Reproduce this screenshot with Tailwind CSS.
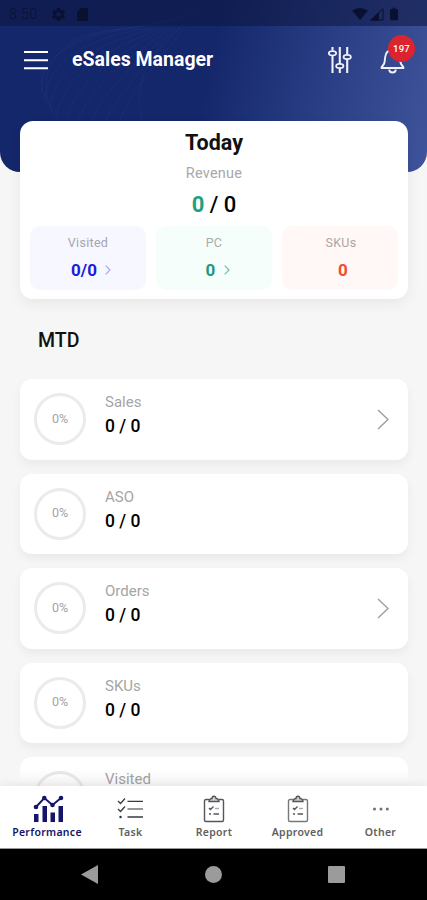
<!DOCTYPE html>
<html lang="en">
<head>
<meta charset="utf-8">
<title>eSales Manager</title>
<script src="https://cdn.jsdelivr.net/npm/@tailwindcss/browser@4"></script>
</head>
<body class="w-[427px] h-[900px] overflow-hidden bg-[#f6f6f6] font-['Roboto',sans-serif] text-black">
<div class="flex h-[900px] w-[427px] flex-col">
  <main class="h-[786px] shrink-0 overflow-hidden">
    <header class="relative h-[172px] overflow-hidden rounded-b-[20px] bg-[linear-gradient(103deg,#15276b_0%,#15276b_48%,#253a80_69%,#40549c_100%)]">
      <svg class="absolute left-0 top-0" width="427" height="172" fill="none" stroke="#8da5e8" stroke-opacity=".08" stroke-width=".7">
        <path d="M56 118C34 82 48 42 104 32S190 20 213 0"/><path d="M48 104C29 67 52 38 112 30S178 22 202 0"/>
        <path d="M42 92C38 57 74 33 142 28"/><path d="M45 100C46 63 85 37 151 28"/><path d="M50 109C53 70 94 43 158 28"/>
        <path d="M56 118C62 78 104 49 164 28"/><path d="M66 120C77 83 113 55 168 28"/><path d="M78 120C91 88 122 61 172 28"/>
        <path d="M92 120C103 93 130 67 176 28"/><path d="M106 120C116 98 138 72 180 28"/><path d="M120 120C127 101 144 77 184 28"/>
        <path d="M142 120C134 88 143 52 190 20"/>
      </svg>
      <div class="relative flex h-[26px] items-center bg-[#0c1640]/55 pl-[9px] pr-[29px] text-[#0a1130]">
        <span class="w-[43px] text-[14px] leading-none tracking-[.6px] font-light pt-[2px]">8:50</span>
        <svg class="mt-[2px]" width="13" height="13" viewBox="0 0 14 14" fill="currentColor" fill-rule="evenodd"><path d="M5.500 0h3l.5 2 1.500.8 2-.6L14 4.700 12.600 6.200v1.600L14 9.300l-1.500 2.500-2-.6L9 12l-.5 2h-3L5 12l-1.500-.8-2 .6L0 9.300l1.400-1.500V6.200L0 4.700l1.500-2.500 2 .6L5 2zM7 4.500a2.500 2.500 0 1 0 0 5 2.500 2.500 0 0 0 0-5z"/></svg>
        <svg class="ml-[12px] mt-[2px]" width="11" height="13" viewBox="0 0 11 13" fill="currentColor"><path d="M4 0h6q1 0 1 1v11q0 1-1 1H1q-1 0-1-1V4z"/></svg>
        <svg class="ml-auto mt-[1px]" width="16" height="12" viewBox="0 0 16 12" fill="currentColor"><path d="M0 2.500Q8-2.500 16 2.500L8 12z"/></svg>
        <svg class="ml-[2px] mt-[2px]" width="14" height="13" viewBox="0 0 14 13"><path d="M13 .8V12H1z" fill="none" stroke="currentColor"/><path d="M9 4v8.500H0z" fill="currentColor"/></svg>
        <svg class="ml-[6px] mt-[2px]" width="8" height="14" viewBox="0 0 9 14" fill="currentColor"><path d="M3 0h3v1.500h2q1 0 1 1V13q0 1-1 1H1q-1 0-1-1V2.500q0-1 1-1h2z"/></svg>
      </div>
      <div class="relative flex h-[68px] items-center pl-[24px] pr-[21px] text-white">
        <svg width="24" height="20" viewBox="0 0 24 20" stroke="#fff" stroke-width="1.900"><path d="M0 2h24M0 10.300h24M0 18.300h24"/></svg>
        <h1 class="ml-[24px] whitespace-nowrap text-[19.500px] font-bold leading-none [text-shadow:0_0_1px_#00005c]">eSales Manager</h1>
        <svg class="ml-auto" width="26" height="28" viewBox="0 0 26 28" fill="none" stroke="#f1f2fb" stroke-width="2.100"><path d="M5.500 1v3.500M5.500 9.500V27M12.800 1v17M12.800 22.500V27M20.200 1v7.500M20.200 13V27"/><ellipse cx="5.500" cy="7.300" rx="3.700" ry="2.200" stroke-width="1.700"/><ellipse cx="12.800" cy="20" rx="3.700" ry="2.200" stroke-width="1.700"/><ellipse cx="20.200" cy="11" rx="3.700" ry="2.200" stroke-width="1.700"/></svg>
        <div class="relative ml-[27px] h-[28px] w-[26px]">
          <svg width="26" height="28" viewBox="0 0 26 28" fill="none" stroke="#f1f2fb" stroke-width="1.900" stroke-linejoin="round"><path d="M1.500 22C1.500 20 4 19.500 4.500 16.500L5.200 11C5.700 6.500 8.500 4 12.500 4S19.300 6.500 19.800 11L20.500 16.500C21 19.500 23.500 20 23.500 22z"/><path d="M9.300 23.500a3.200 3 0 0 0 6.400 0"/></svg>
          <span class="absolute left-[8px] top-[-11px] flex h-[27px] w-[27px] items-center justify-center rounded-full bg-[#dc2330] text-[9.500px] font-medium leading-none tracking-[.2px]">197</span>
        </div>
      </div>
    </header>

    <section class="relative ml-[20px] -mt-[51px] mr-[19px] flex h-[178px] flex-col items-center rounded-[13px] bg-white px-[10px] pt-[11px] shadow-[0_5px_14px_rgba(0,0,0,0.06)]">
      <h2 class="text-[21.500px] font-bold leading-[22px] text-[#111]">Today</h2>
      <p class="mt-[12px] text-[14.500px] leading-[16px] tracking-[.25px] text-[#a8a8a8]">Revenue</p>
      <p class="mt-[10px] text-[22px] font-medium leading-[26px]"><span class="font-bold text-[#229f83]">0</span> / 0</p>
      <div class="mt-[8px] grid w-full grid-cols-3 gap-[10px] text-center">
        <div class="h-[64px] rounded-[10px] bg-[#f6f7ff] pt-[9px]">
          <p class="text-[12.500px] leading-[16px] tracking-[.3px] text-[#a5a5ad]">Visited</p>
          <div class="mt-[9px] flex items-center justify-center gap-[8px] pl-[10px] text-[17px] font-bold leading-[20px] text-[#1c1cda]"><span>0/0</span><svg class="mr-[4px]" width="6" height="10" viewBox="0 0 6 10" fill="none" stroke="#ada6f0" stroke-width="1.200"><path d="M.7.700 5 5 .7 9.300"/></svg></div>
        </div>
        <div class="h-[64px] rounded-[10px] bg-[#f5fefb] pt-[9px]">
          <p class="text-[12.500px] leading-[16px] tracking-[.3px] text-[#a5adaa]">PC</p>
          <div class="mt-[9px] flex items-center justify-center gap-[9px] pl-[9px] text-[17px] font-bold leading-[20px] text-[#25967a]"><span>0</span><svg class="mr-[1px]" width="6" height="10" viewBox="0 0 6 10" fill="none" stroke="#72bda8" stroke-width="1.200"><path d="M.7.700 5 5 .7 9.300"/></svg></div>
        </div>
        <div class="h-[64px] rounded-[10px] bg-[#fff8f6] pt-[9px]">
          <p class="pl-[2px] text-[12.500px] leading-[16px] tracking-[.3px] text-[#ada5a3]">SKUs</p>
          <div class="mt-[9px] pl-[6px] text-[17px] font-bold leading-[20px] text-[#f04d2e]">0</div>
        </div>
      </div>
    </section>

    <h2 class="ml-[38px] mt-[31px] h-[49px] text-[19.500px] font-medium leading-[22px] text-[#111]">MTD</h2>

    <section class="ml-[20px] mr-[19px] flex flex-col gap-[14px]">
      <article class="flex h-[80.500px] shrink-0 items-center rounded-[12px] bg-white pl-[14px] pr-[19px] shadow-[0_5px_10px_rgba(0,0,0,0.05)]">
        <div class="flex h-[52px] w-[52px] items-center justify-center rounded-full border-[3px] border-[#ebebeb] text-[12.500px] tracking-[-.2px] text-[#a3a3a3]">0%</div>
        <div class="ml-[19px] -mt-[8px]"><p class="text-[15px] leading-[19px] text-[#a5a5a5]">Sales</p><p class="mt-[3px] text-[17.500px] font-medium leading-[22px]">0 / 0</p></div>
        <svg class="ml-auto" width="12" height="21" viewBox="0 0 12 21" fill="none" stroke="#a0a0a0" stroke-width="1.500"><path d="m1 1 10 9.500L1 20"/></svg>
      </article>
      <article class="flex h-[80.500px] shrink-0 items-center rounded-[12px] bg-white pl-[14px] pr-[19px] shadow-[0_5px_10px_rgba(0,0,0,0.05)]">
        <div class="flex h-[52px] w-[52px] items-center justify-center rounded-full border-[3px] border-[#ebebeb] text-[12.500px] tracking-[-.2px] text-[#a3a3a3]">0%</div>
        <div class="ml-[19px] -mt-[8px]"><p class="text-[15px] leading-[19px] text-[#a5a5a5]">ASO</p><p class="mt-[3px] text-[17.500px] font-medium leading-[22px]">0 / 0</p></div>
      </article>
      <article class="flex h-[80.500px] shrink-0 items-center rounded-[12px] bg-white pl-[14px] pr-[19px] shadow-[0_5px_10px_rgba(0,0,0,0.05)]">
        <div class="flex h-[52px] w-[52px] items-center justify-center rounded-full border-[3px] border-[#ebebeb] text-[12.500px] tracking-[-.2px] text-[#a3a3a3]">0%</div>
        <div class="ml-[19px] -mt-[8px]"><p class="text-[15px] leading-[19px] text-[#a5a5a5]">Orders</p><p class="mt-[3px] text-[17.500px] font-medium leading-[22px]">0 / 0</p></div>
        <svg class="ml-auto" width="12" height="21" viewBox="0 0 12 21" fill="none" stroke="#a0a0a0" stroke-width="1.500"><path d="m1 1 10 9.500L1 20"/></svg>
      </article>
      <article class="flex h-[80.500px] shrink-0 items-center rounded-[12px] bg-white pl-[14px] pr-[19px] shadow-[0_5px_10px_rgba(0,0,0,0.05)]">
        <div class="flex h-[52px] w-[52px] items-center justify-center rounded-full border-[3px] border-[#ebebeb] text-[12.500px] tracking-[-.2px] text-[#a3a3a3]">0%</div>
        <div class="ml-[19px] -mt-[8px]"><p class="text-[15px] leading-[19px] text-[#a5a5a5]">SKUs</p><p class="mt-[3px] text-[17.500px] font-medium leading-[22px]">0 / 0</p></div>
      </article>
      <article class="flex h-[29px] shrink-0 items-start overflow-hidden rounded-t-[12px] bg-[linear-gradient(#fff_40%,#f4f4f4)] pl-[14px]">
        <div class="mt-[14px] h-[52px] w-[52px] shrink-0 rounded-full border-[3px] border-[#e5e5e5]"></div>
        <p class="ml-[19px] mt-[15px] text-[15px] leading-[14px] text-[#a0a0a0]">Visited</p>
      </article>
    </section>
  </main>

  <nav class="relative grid h-[63px] shrink-0 grid-cols-[94px_73px_94px_73px_93px] border-b border-[#999] bg-white pt-[9px] font-['Noto_Sans',sans-serif] text-[10.500px] font-semibold leading-[14px] tracking-[.3px] text-[#606060] shadow-[0_-3px_8px_rgba(0,0,0,0.05)]">
    <a class="flex flex-col items-center gap-[2px] text-[#15156b]">
      <svg class="ml-[3px]" width="31" height="28" viewBox="0 0 31 28" fill="currentColor"><path d="M1 19h4.500v8H1zM9.500 11H14v16H9.500zM17.500 17.500H22V27h-4.500zM25.500 11H30v16h-4.500z"/><path d="M3 12 11.300 3 19.500 10 28 3" fill="none" stroke="currentColor" stroke-width="1.900"/><circle cx="3" cy="12" r="2.300"/><circle cx="11.300" cy="3" r="2.300"/><circle cx="19.500" cy="10" r="2.300"/><circle cx="28" cy="3" r="2.300"/></svg>
      <span>Performance</span>
    </a>
    <a class="flex flex-col items-center gap-[2px]">
      <svg width="27" height="28" viewBox="0 0 27 28" fill="none" stroke="#3a3a43" stroke-width="1.300"><path d="m1 6 2.500 2.500L8 3.500M1 14l2.500 2.500L8 11.500"/><path d="M10.500 6.300H26M10.500 22H26"/><path d="M10.500 14H26" stroke="#8b8b90" stroke-width="1.800"/><circle cx="3.500" cy="22" r="1.200" fill="#25254a" stroke="none"/></svg>
      <span>Task</span>
    </a>
    <a class="flex flex-col items-center gap-[2px]">
      <svg width="22" height="28" viewBox="0 0 22 28" fill="none" stroke="#55555c" stroke-width="1.400"><path d="M6 4.500H3Q1.500 4.500 1.500 6v19q0 1.500 1.500 1.500h16q1.500 0 1.500-1.500V6q0-1.500-1.500-1.500h-3"/><path d="M6 6.500h10q-.5-3-3-3c0-3-4-3-4 0q-2.500 0-3 3z" fill="#d5d5d5"/><path d="m6 13 1.500 1.500 3-3M6 19h2M10.500 19H16"/><path d="M12 13.500h4" stroke="#aaa"/></svg>
      <span>Report</span>
    </a>
    <a class="flex flex-col items-center gap-[2px]">
      <svg width="22" height="28" viewBox="0 0 22 28" fill="none" stroke="#77777c" stroke-width="1.400"><path d="M6 4.500H3Q1.500 4.500 1.500 6v19q0 1.500 1.500 1.500h16q1.500 0 1.500-1.500V6q0-1.500-1.500-1.500h-3"/><path d="M6 6.500h10q-.5-3-3-3c0-3-4-3-4 0q-2.500 0-3 3z" fill="#ccc" stroke="#55555a"/><path d="m6 13 1.500 1.500 3-3M6 19h2M10.500 19H16" stroke="#55555a"/><path d="M12 13.500h4" stroke="#aaa"/></svg>
      <span>Approved</span>
    </a>
    <a class="flex flex-col items-center gap-[2px]">
      <svg width="18" height="28" viewBox="0 0 18 28" fill="#707070"><circle cx="2.500" cy="14" r="1.500"/><circle cx="9" cy="14" r="1.500"/><circle cx="15.300" cy="14" r="1.500"/></svg>
      <span>Other</span>
    </a>
  </nav>

  <footer class="flex h-[51px] items-center bg-black pl-[81px]">
    <svg width="17" height="19" viewBox="0 0 17 19" fill="#9b9b9b"><path d="M0 9.500 17 0v19z"/></svg>
    <span class="ml-[107px] h-[17px] w-[17px] rounded-full bg-[#9b9b9b]"></span>
    <span class="ml-[106px] h-[17px] w-[17px] rounded-[1px] bg-[#9b9b9b]"></span>
  </footer>
</div>
</body>
</html>
